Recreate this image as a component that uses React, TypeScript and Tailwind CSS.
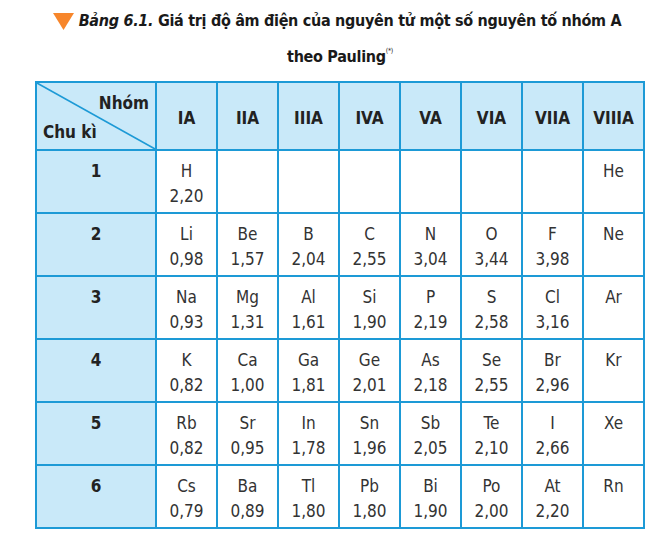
import React from "react";

const groups = ["IA", "IIA", "IIIA", "IVA", "VA", "VIA", "VIIA", "VIIIA"];

type Cell = [string, string] | null;

const rows: { n: string; cells: Cell[] }[] = [
  { n: "1", cells: [["H", "2,20"], null, null, null, null, null, null, ["He", ""]] },
  { n: "2", cells: [["Li", "0,98"], ["Be", "1,57"], ["B", "2,04"], ["C", "2,55"], ["N", "3,04"], ["O", "3,44"], ["F", "3,98"], ["Ne", ""]] },
  { n: "3", cells: [["Na", "0,93"], ["Mg", "1,31"], ["Al", "1,61"], ["Si", "1,90"], ["P", "2,19"], ["S", "2,58"], ["Cl", "3,16"], ["Ar", ""]] },
  { n: "4", cells: [["K", "0,82"], ["Ca", "1,00"], ["Ga", "1,81"], ["Ge", "2,01"], ["As", "2,18"], ["Se", "2,55"], ["Br", "2,96"], ["Kr", ""]] },
  { n: "5", cells: [["Rb", "0,82"], ["Sr", "0,95"], ["In", "1,78"], ["Sn", "1,96"], ["Sb", "2,05"], ["Te", "2,10"], ["I", "2,66"], ["Xe", ""]] },
  { n: "6", cells: [["Cs", "0,79"], ["Ba", "0,89"], ["Tl", "1,80"], ["Pb", "1,80"], ["Bi", "1,90"], ["Po", "2,00"], ["At", "2,20"], ["Rn", ""]] },
];

export default function App() {
  return (
    <div className="w-[646px] h-[534px] bg-white overflow-hidden font-['Liberation_Sans_Narrow','DejaVu_Sans_Condensed',sans-serif] text-[#222]">
      <div className="ml-[35px] w-[610px] pt-[6px] flex flex-col items-center">
        <div className="flex items-center gap-[5px] h-[30px] pr-[6px] whitespace-nowrap">
          <svg width="21" height="17" viewBox="0 0 21 17" className="shrink-0">
            <polygon points="0,0 21,0 10.5,17" fill="#f7862b" />
          </svg>
          <span className="text-[16px] font-bold tracking-[-0.3px] text-[#1a1a1a]">
            <span className="italic">Bảng 6.1.</span> Giá trị độ âm điện của nguyên tử một số nguyên tố nhóm A
          </span>
        </div>
        <div className="h-[38px] pt-[4px] flex items-center text-[16px] font-bold tracking-[-0.3px] text-[#1a1a1a] whitespace-nowrap">
          theo Pauling<sup className="text-[7px] font-normal -top-[6px]">(*)</sup>
        </div>
      </div>

      <div className="ml-[35px] mt-[7px] w-fit grid grid-cols-[118px_repeat(8,59px)] grid-rows-[66px_repeat(6,61px)] gap-[2px] p-[2px] bg-[#1d9ad6]">
        <div className="relative bg-[#c9e9f9]">
          <svg className="absolute inset-0" width="118" height="66" viewBox="0 0 118 66">
            <line x1="0" y1="0" x2="118" y2="66" stroke="#1d9ad6" strokeWidth="1.6" />
          </svg>
          <span className="absolute right-[6px] top-[8px] text-[17px] font-bold">Nhóm</span>
          <span className="absolute left-[6px] bottom-[4px] text-[17px] font-bold">Chu kì</span>
        </div>
        {groups.map((g) => (
          <div key={g} className="bg-[#c9e9f9] flex items-center justify-center pt-[6px] text-[17px] font-bold">
            {g}
          </div>
        ))}
        {rows.map((r) => (
          <React.Fragment key={r.n}>
            <div className="bg-[#c9e9f9] flex justify-center pt-[8px] text-[17px] font-bold leading-[25px]">{r.n}</div>
            {r.cells.map((c, i) => (
              <div key={i} className="bg-white flex flex-col items-center pt-[8px] text-[17px] leading-[25px] text-[#333]">
                {c && (
                  <>
                    <span>{c[0]}</span>
                    <span>{c[1]}</span>
                  </>
                )}
              </div>
            ))}
          </React.Fragment>
        ))}
      </div>
    </div>
  );
}
